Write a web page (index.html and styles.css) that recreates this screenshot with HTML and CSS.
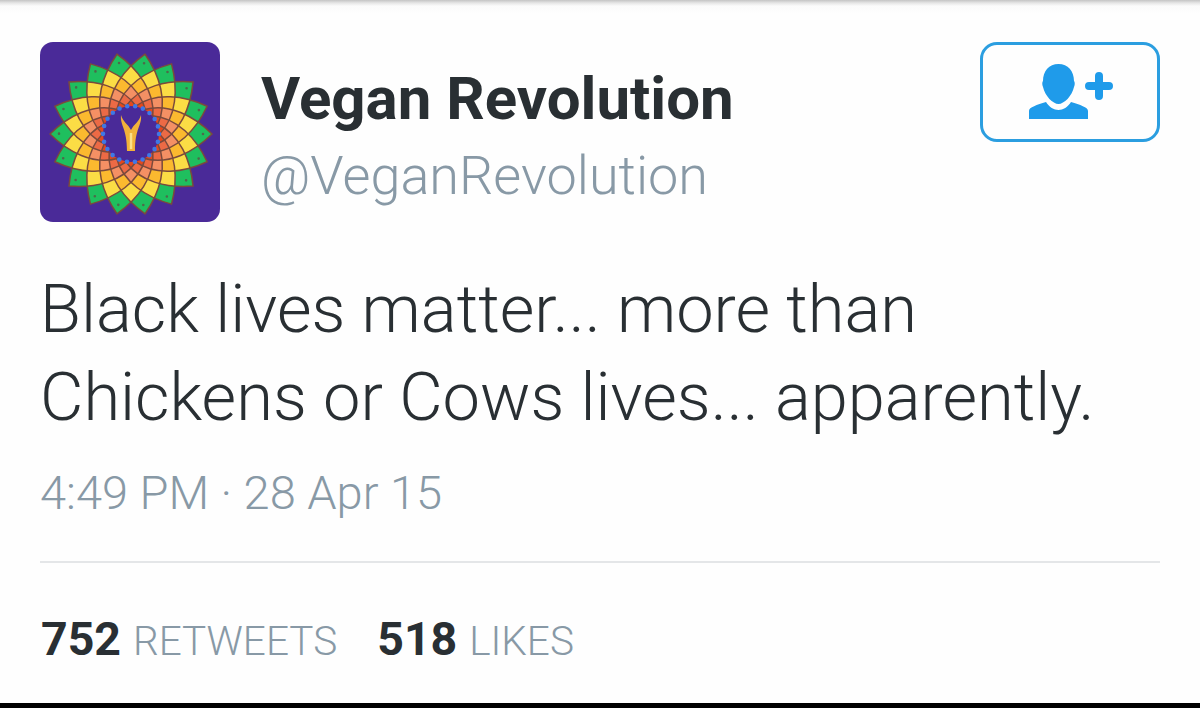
FILE: index.html
```html
<!DOCTYPE html>
<html lang="en">
<head>
<meta charset="utf-8">
<title>Vegan Revolution</title>
<link rel="stylesheet" href="styles.css">
</head>
<body>
<main class="tweet">
  <header class="head">
    <svg class="avatar" viewBox="0 0 180 180" aria-hidden="true">
      <defs>
        <path id="petal" d="M-24.500-13.600C-31.400-37.600-17.700-63.300 0-81C17.700-63.300 31.400-37.600 24.500-13.600"/>
        <g id="ring">
          <use href="#petal" transform="rotate(10)"/><use href="#petal" transform="rotate(30)"/>
          <use href="#petal" transform="rotate(50)"/><use href="#petal" transform="rotate(70)"/>
          <use href="#petal" transform="rotate(90)"/><use href="#petal" transform="rotate(110)"/>
          <use href="#petal" transform="rotate(130)"/><use href="#petal" transform="rotate(150)"/>
          <use href="#petal" transform="rotate(170)"/><use href="#petal" transform="rotate(190)"/>
          <use href="#petal" transform="rotate(210)"/><use href="#petal" transform="rotate(230)"/>
          <use href="#petal" transform="rotate(250)"/><use href="#petal" transform="rotate(270)"/>
          <use href="#petal" transform="rotate(290)"/><use href="#petal" transform="rotate(310)"/>
          <use href="#petal" transform="rotate(330)"/><use href="#petal" transform="rotate(350)"/>
        </g>
      </defs>
      <rect width="180" height="180" rx="13" fill="#4a2a98"/>
      <g transform="translate(91 92)">
        <use href="#ring" fill="#1fbf5e"/>
        <use href="#ring" fill="#fbdd45" transform="rotate(10) scale(.84)"/>
        <use href="#ring" fill="#fbb92f" transform="scale(.705)"/>
        <use href="#ring" fill="#f49064" transform="rotate(10) scale(.593)"/>
        <use href="#ring" fill="#ec6a45" transform="scale(.498)"/>
        <use href="#ring" fill="#e5481c" transform="rotate(10) scale(.418)"/>
        <use href="#ring" fill="none" stroke="#7a4a3c" stroke-width="1.500"/>
        <circle r="72" fill="none" stroke="#4d6a4a" stroke-width="2.600" stroke-linecap="round" stroke-dasharray="0 25.133"/>
        <circle r="28" fill="#4a2a98"/>
        <circle r="28" fill="none" stroke="#3f78e6" stroke-width="4.600" stroke-linecap="round" stroke-dasharray="0 7.996"/>
        <path d="M-10-19C-11-8-4-6-4 17H4C4-6 11-8 10-19C8-12 3-10 0-4C-3-10-8-12-10-19Z" fill="#f2b23a"/>
        <path d="M0-1V15" stroke="#fbe08a" stroke-width="2.500"/>
      </g>
    </svg>
    <div class="names">
      <div class="name">Vegan Revolution</div>
      <div class="handle">@VeganRevolution</div>
    </div>
    <button class="follow" type="button" aria-label="Follow">
      <svg class="follow-icon" viewBox="0 0 82 56" aria-hidden="true">
        <path d="M29.500 0C39 0 45 7 45 17C46 18 46 21 45 23C43 32 35 40 29.500 40C24 40 16 32 14 23C13 21 13 18 14 17C14 7 20 0 29.500 0Z"/>
        <path d="M0 55V47C0 43 8 41 17 38C20 43 25 46 29.500 46C34 46 39 43 42 38C51 41 59 43 59 47V55Z"/>
        <path class="plus" d="M70 12V32M60 22H80"/>
      </svg>
    </button>
  </header>
  <p class="text">Black lives matter... more than<br>Chickens or Cows lives... apparently.</p>
  <time class="time">4:49 PM · 28 Apr 15</time>
  <footer class="stats">
    <span class="stat"><b>752</b> RETWEETS</span>
    <span class="stat"><b>518</b> LIKES</span>
  </footer>
</main>
</body>
</html>
```
FILE: styles.css
```css
* { box-sizing: border-box; }
html, body { margin: 0; height: 708px; overflow: hidden; }
body {
  background: #fefefe;
  font-family: Roboto, "Liberation Sans", sans-serif;
  color: #292f33;
  display: flex;
  flex-direction: column;
}
.tweet {
  flex: 1;
  padding: 42px 40px 0;
  background: linear-gradient(#c4c4c4 0, #e6e6e6 3px, #fbfbfb 6px, #fefefe 14px);
  border-bottom: 5px solid #000;
}
.head { display: flex; align-items: flex-start; }
.avatar { width: 180px; height: 180px; flex: none; }
.names { flex: 1; padding: 21px 0 0 41px; }
.name { font-size: 60px; line-height: 72px; font-weight: 700; letter-spacing: 0; }
.handle { font-size: 54px; line-height: 60px; font-weight: 300; color: #8899a6; margin-top: 11px; }
.follow {
  width: 180px; height: 100px; padding: 0;
  background: transparent;
  border: 3.500px solid #2b9ee0;
  border-radius: 17px;
  display: flex; align-items: center; justify-content: center;
}
.follow-icon { width: 82px; height: 56px; fill: #1f9bea; overflow: visible; }
.follow-icon .plus { fill: none; stroke: #1f9bea; stroke-width: 8; stroke-linecap: round; }
.text { margin: 43px 0 0; font-size: 66.800px; line-height: 88px; font-weight: 300; }
.time { display: block; margin-top: 22px; font-size: 47px; line-height: 60px; font-weight: 300; color: #8899a6; }
.stats {
  margin-top: 38px; border-top: 2px solid #e4e6e8; padding: 46px 0 0 1px;
  display: flex; gap: 40px;
  font-size: 40.500px; line-height: 60px; font-weight: 300; color: #8899a6; word-spacing: 2px;
}
.stat b { font-size: 46.500px; font-weight: 700; color: #292f33; }
```
